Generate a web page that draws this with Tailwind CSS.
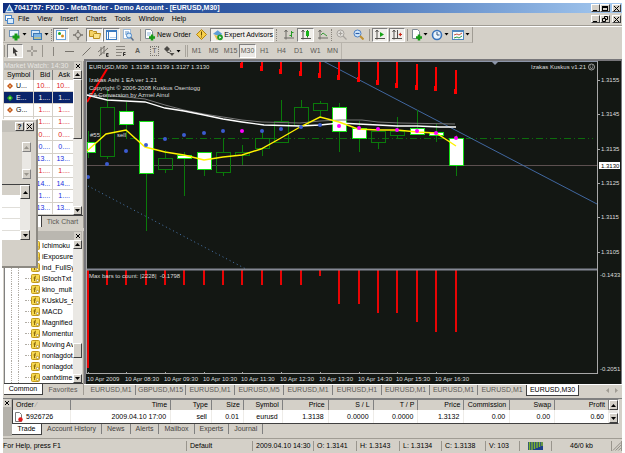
<!DOCTYPE html>
<html lang="en">

<head>
  <meta charset="UTF-8">
  <meta name="viewport" content="width=device-width, initial-scale=1.0">
  <title>7041757: FXDD - MetaTrader - Demo Account - [EURUSD,M30]</title>
  <script src="https://cdn.jsdelivr.net/npm/@tailwindcss/browser@4"></script>
</head>

<body class="bg-white font-['Liberation_Sans','Arial',sans-serif] text-[7px] leading-[10px] text-black overflow-hidden">
  <div class="mx-[3px] mt-[3px] bg-[#d4d0c8] min-h-screen">

    <!-- Title bar -->
    <header class="flex items-center h-[10px] bg-linear-to-r from-[#0f2f80] via-[#3d68b0] to-[#a6caf0] text-white pl-[2px] pr-[1px]">
      <svg class="w-[9px] h-[9px]" viewBox="0 0 9 9"><path d="M4.500 0L9 8.500H0z" fill="#dbe9f5" /><path d="M4.500 2L6.500 7H2z" fill="#3f8bd0" /></svg>
      <h1 class="flex-1 font-bold whitespace-nowrap">7041757: FXDD - MetaTrader - Demo Account - [EURUSD,M30]</h1>
      <div class="flex">
        <button aria-label="Minimize" class="w-[9px] h-[8px] bg-[#d4d0c8] border border-t-white border-l-white border-r-[#404040] border-b-[#404040] flex items-end pl-px"><span class="w-[4px] h-px bg-black"></span></button>
        <button aria-label="Maximize" class="w-[10px] h-[8px] bg-[#d4d0c8] border border-t-white border-l-white border-r-[#404040] border-b-[#404040] flex items-center justify-center"><span class="w-[6px] h-[5px] border border-t-2 border-black"></span></button>
        <button aria-label="Close" class="ml-[2px] w-[9px] h-[8px] bg-[#d4d0c8] border border-t-white border-l-white border-r-[#404040] border-b-[#404040] flex items-center justify-center"><svg class="w-[5px] h-[5px]" viewBox="0 0 5 5"><path d="M0 0L5 5M5 0L0 5" stroke="#000" /></svg></button>
      </div>
    </header>

    <!-- Menu -->
    <nav class="flex items-center h-[13px] pl-[2px] pr-[1px] border-b border-[#a09c94]">
      <svg class="w-[9px] h-[9px] mr-[4px]" viewBox="0 0 9 9"><rect x=".5" y=".5" width="6" height="5" fill="#fff" stroke="#4a86c8" /><rect x="2.500" y="3.500" width="6" height="5" fill="#d9ecfb" stroke="#4a86c8" /></svg>
      <div class="flex flex-1 gap-[8px]">
        <a href="#">File</a><a href="#">View</a><a href="#">Insert</a><a href="#">Charts</a><a href="#">Tools</a><a href="#">Window</a><a href="#">Help</a>
      </div>
      <button aria-label="Minimize chart" class="w-[9px] h-[8px] border border-t-white border-l-white border-r-[#404040] border-b-[#404040] flex items-end pl-px"><span class="w-[4px] h-px bg-black"></span></button>
      <button aria-label="Restore chart" class="w-[10px] h-[8px] border border-t-white border-l-white border-r-[#404040] border-b-[#404040] flex items-center justify-center"><svg class="w-[6px] h-[6px]" viewBox="0 0 6 6"><path d="M2.500 2V.5H5.500V3.500H4M.5 2.500h3v3h-3z" fill="none" stroke="#000" /></svg></button>
      <button aria-label="Close chart" class="ml-[2px] w-[9px] h-[8px] border border-t-white border-l-white border-r-[#404040] border-b-[#404040] flex items-center justify-center"><svg class="w-[5px] h-[5px]" viewBox="0 0 5 5"><path d="M0 0L5 5M5 0L0 5" stroke="#000" /></svg></button>
    </nav>

    <!-- Standard toolbar -->
    <div class="flex border-t border-white">
      <div class="flex items-center h-[16px] pl-px border-r border-b border-r-[#a09c94] border-b-[#b8b4ac]">
        <span class="w-[2px] h-[12px] mr-px border-l border-[#99958d]"></span>
        <button aria-label="New chart" class="flex items-center w-[22px] h-[14px] pl-[2px]">
          <svg class="w-[12px] h-[12px]" viewBox="0 0 12 12"><rect x=".5" y="1.500" width="9" height="6" fill="#eaf4fc" stroke="#6a8fb5" /><path d="M7 4.500v7M3.500 8h7" stroke="#169a16" stroke-width="3" /></svg>
          <svg class="w-[5px] h-[3px] ml-px" viewBox="0 0 5 3"><path d="M.5 0h4L2.500 2.500z" /></svg>
        </button>
        <button aria-label="Profiles" class="flex items-center w-[22px] h-[14px] pl-[2px]">
          <svg class="w-[12px] h-[12px]" viewBox="0 0 12 12"><rect x=".5" y="1.500" width="8" height="6" fill="#d5e8f8" stroke="#4f8ac4" /><rect x="2.500" y="4.500" width="8" height="6" fill="#7db4e4" stroke="#3c78b4" /><path d="M3 9h7" stroke="#e9c94a" /></svg>
          <svg class="w-[5px] h-[3px] ml-px" viewBox="0 0 5 3"><path d="M.5 0h4L2.500 2.500z" /></svg>
        </button>
        <span class="w-[2px] h-[12px] border-l border-dotted border-[#88847c]"></span>
        <button aria-label="Market Watch" aria-pressed="true" class="flex items-center justify-center w-[16px] h-[14px] bg-[#f0eeea] border border-t-[#808080] border-l-[#808080] border-r-white border-b-white">
          <svg class="w-[10px] h-[10px]" viewBox="0 0 10 10"><rect x=".5" y=".5" width="9" height="9" fill="#fff" stroke="#66a2dc" /><circle cx="3.500" cy="3.500" r="1.500" fill="#1da51d" /><circle cx="6.500" cy="6" r="1.500" fill="#d88b1c" /></svg>
        </button>
        <button aria-label="Data Window" class="flex items-center justify-center w-[17px] h-[14px]">
          <svg class="w-[10px] h-[10px]" viewBox="0 0 10 10"><circle cx="5" cy="5" r="2.500" fill="none" stroke="#77736c" /><path d="M5 0v3M5 7v3M0 5h3M7 5h3" stroke="#77736c" stroke-width="1.500" /></svg>
        </button>
        <button aria-label="Navigator" aria-pressed="true" class="flex items-center justify-center w-[17px] h-[14px] bg-[#f0eeea] border border-t-[#808080] border-l-[#808080] border-r-white border-b-white">
          <svg class="w-[12px] h-[11px]" viewBox="0 0 12 11"><path d="M.5 1.500h3l1 1h3v5h-7z" fill="#f4d264" stroke="#b98d1d" /><path d="M4.500 5.500l1-1h6l-1 5h-6z" fill="#fbe48a" stroke="#b98d1d" /></svg>
        </button>
        <button aria-label="Terminal" aria-pressed="true" class="flex items-center justify-center w-[17px] h-[14px] bg-[#f0eeea] border border-t-[#808080] border-l-[#808080] border-r-white border-b-white">
          <svg class="w-[11px] h-[10px]" viewBox="0 0 11 10"><rect x=".5" y=".5" width="10" height="9" fill="#fff" stroke="#3b7ac0" /><path d="M1 1.500h9M2.500 1v8" stroke="#3b7ac0" /><path d="M4 7.500h6" stroke="#b8d2ec" /></svg>
        </button>
        <button aria-label="Strategy Tester" class="flex items-center justify-center w-[17px] h-[14px]">
          <svg class="w-[11px] h-[12px]" viewBox="0 0 11 12"><rect x=".5" y=".5" width="7" height="9" fill="#fff" stroke="#9db9d6" /><path d="M2 3h4M2 5h3" stroke="#5c93cc" /><circle cx="6" cy="6.500" r="2.500" fill="#d8ebfa" stroke="#4a86c8" /><path d="M8 8.500l2.500 3" stroke="#5b6f88" stroke-width="1.500" /></svg>
        </button>
        <span class="h-[12px] mx-[3px] border-l border-[#99958d]"></span>
        <button class="flex items-center w-[48px] h-[14px] whitespace-nowrap">
          <svg class="w-[12px] h-[12px] mr-px" viewBox="0 0 12 12"><path d="M1.500 .5h5l2 2v7h-7z" fill="#fff" stroke="#7f8a95" /><path d="M3 4h4M3 6h3" stroke="#8db5da" /><path d="M8 5.500v6M5 8.500h6" stroke="#169a16" stroke-width="2.500" /></svg>
          New Order
        </button>
        <button aria-label="MetaEditor" class="flex items-center justify-center w-[18px] h-[14px]">
          <svg class="w-[11px] h-[11px]" viewBox="0 0 11 11"><path d="M5.500 .5l5 5-5 5-5-5z" fill="#f6cf4c" stroke="#b4830f" /><path d="M5.500 2.500v4M5.500 7.500v1" stroke="#6b4b00" /></svg>
        </button>
        <button aria-pressed="true" class="flex items-center w-[64px] h-[14px] pl-px bg-[#f0eeea] whitespace-nowrap border border-t-[#808080] border-l-[#808080] border-r-white border-b-white">
          <svg class="w-[12px] h-[12px] mr-px" viewBox="0 0 12 12"><path d="M1 5l5-4 5 4-4 2z" fill="#5e9ed8" /><path d="M2 5.500l4 1.500 2-1 1 4-4 1z" fill="#e9be50" /><circle cx="8.500" cy="8.500" r="3" fill="#1e9c2a" /><path d="M7.700 7l2.200 1.500-2.200 1.500z" fill="#fff" /></svg>
          Expert Advisors
        </button>
        <span class="w-[2px] h-[12px] ml-[2px] mr-[2px] border-l border-dotted border-[#88847c]"></span>
        <button aria-label="Bar chart" class="flex items-center justify-center w-[17px] h-[14px]">
          <svg class="w-[10px] h-[10px]" viewBox="0 0 10 10"><path d="M2 0v9.500M0 8h10M.5 2l1.500-2 1.500 2" fill="none" stroke="#6c6a66" /><path d="M7.500 1v6M5.500 5.500h2M7.500 2.500H9.500" stroke="#249a24" /></svg>
        </button>
        <button aria-label="Candlesticks" aria-pressed="true" class="flex items-center justify-center w-[17px] h-[14px] bg-[#f0eeea] border border-t-[#808080] border-l-[#808080] border-r-white border-b-white">
          <svg class="w-[10px] h-[10px]" viewBox="0 0 10 10"><path d="M2 0v9.500M0 8.500h10M.5 2l1.500-2 1.500 2" fill="none" stroke="#55534f" /><path d="M6.500 0v7.500" stroke="#0b7d0b" /><rect x="5" y="1" width="3" height="5" fill="#17b317" /></svg>
        </button>
        <button aria-label="Line chart" class="flex items-center justify-center w-[17px] h-[14px]">
          <svg class="w-[10px] h-[10px]" viewBox="0 0 10 10"><path d="M2 0v9.500M0 8h10M.5 2l1.500-2 1.500 2" fill="none" stroke="#6c6a66" /><path d="M3 5l2-2 4 3" fill="none" stroke="#3a9a3a" /></svg>
        </button>
        <span class="w-[2px] h-[12px] border-l border-dotted border-[#88847c]"></span>
        <button aria-label="Zoom in" class="flex items-center justify-center w-[17px] h-[14px]">
          <svg class="w-[11px] h-[11px]" viewBox="0 0 11 11"><circle cx="4.500" cy="4.500" r="3.500" fill="#e2e0dc" stroke="#a5a29c" /><path d="M2.500 4.500h4M4.500 2.500v4M7 7l3.500 3.500" stroke="#a5a29c" stroke-width="1.200" /></svg>
        </button>
        <button aria-label="Zoom out" class="flex items-center justify-center w-[17px] h-[14px]">
          <svg class="w-[11px] h-[11px]" viewBox="0 0 11 11"><circle cx="4.500" cy="4.500" r="3.500" fill="#d2e8fb" stroke="#4a7fc4" /><path d="M2.500 4.500h4" stroke="#2d5fa8" stroke-width="1.200" /><path d="M7 7l3.500 3.500" stroke="#c09030" stroke-width="2" /></svg>
        </button>
        <span class="h-[12px] mx-[2px] border-l border-[#99958d]"></span>
        <button aria-label="Auto scroll" aria-pressed="true" class="flex items-center justify-center w-[16px] h-[14px] bg-[#f0eeea] border border-t-[#808080] border-l-[#808080] border-r-white border-b-white">
          <svg class="w-[10px] h-[10px]" viewBox="0 0 10 10"><path d="M2 0v9.500M0 8.500h10M.5 2l1.500-2 1.500 2" fill="none" stroke="#55534f" /><path d="M5 2l4 2.500L5 7z" fill="#17a317" /></svg>
        </button>
        <button aria-label="Chart shift" aria-pressed="true" class="flex items-center justify-center w-[16px] h-[14px] ml-px bg-[#f0eeea] border border-t-[#808080] border-l-[#808080] border-r-white border-b-white">
          <svg class="w-[10px] h-[10px]" viewBox="0 0 10 10"><path d="M2 0v9.500M0 8.500h10M.5 2l1.500-2 1.500 2M5.500 0v8" fill="none" stroke="#55534f" /><path d="M6.500 4.500l2.500-2v4z" fill="#cc2c1c" /><path d="M8 4.500h2" stroke="#cc2c1c" /></svg>
        </button>
        <span class="h-[12px] mx-[2px] border-l border-[#99958d]"></span>
        <button aria-label="Indicators" class="flex items-center w-[20px] h-[14px] pl-px">
          <svg class="w-[12px] h-[12px]" viewBox="0 0 12 12"><path d="M1.500 .5h5l2 2v7h-7z" fill="#fff" stroke="#7f8a95" /><path d="M8 5.500v6M5 8.500h6" stroke="#169a16" stroke-width="2.500" /></svg>
          <svg class="w-[5px] h-[3px]" viewBox="0 0 5 3"><path d="M.5 0h4L2.500 2.500z" /></svg>
        </button>
        <button aria-label="Periods" class="flex items-center w-[20px] h-[14px] pl-px">
          <svg class="w-[12px] h-[12px]" viewBox="0 0 12 12"><circle cx="6" cy="6" r="4.500" fill="#e8f3fd" stroke="#3a74bc" stroke-width="1.600" /><path d="M6 3v3h2.500" fill="none" stroke="#34547c" /></svg>
          <svg class="w-[5px] h-[3px] ml-px" viewBox="0 0 5 3"><path d="M.5 0h4L2.500 2.500z" /></svg>
        </button>
        <button aria-label="Templates" class="flex items-center w-[22px] h-[14px] pl-[2px]">
          <svg class="w-[12px] h-[10px]" viewBox="0 0 12 10"><rect x=".5" y=".5" width="11" height="9" fill="#f5faff" stroke="#4f86bd" /><path d="M1 1.500h10" stroke="#4f86bd" /><path d="M2 5l3-1 2 1 3-2" fill="none" stroke="#c4533c" /><path d="M2 8l3-1 2 1 3-2" fill="none" stroke="#2d9a40" /></svg>
          <svg class="w-[5px] h-[3px] ml-px" viewBox="0 0 5 3"><path d="M.5 0h4L2.500 2.500z" /></svg>
        </button>
      </div>
    </div>

    <!-- Line studies and timeframes -->
    <div class="flex h-[16px]">
      <div class="flex items-center pl-px text-[#5c5a56] border-r border-[#b8b4ac]">
        <span class="w-[2px] h-[12px] mr-px border-l border-[#99958d]"></span>
        <button aria-label="Cursor" aria-pressed="true" class="flex items-center justify-center w-[16px] h-[14px] bg-[#ebe9e5] border border-t-[#808080] border-l-[#808080] border-r-white border-b-white">
          <svg class="w-[8px] h-[9px]" viewBox="0 0 8 9"><path d="M2 0l5 5H4.500L6 8.500 4.500 9 3.200 5.800 2 7z" fill="#3c3a38" /></svg>
        </button>
        <button aria-label="Crosshair" class="flex items-center justify-center w-[18px] h-[14px]">
          <svg class="w-[10px] h-[10px]" viewBox="0 0 10 10"><path d="M5 0v4M5 6v4M0 5h4M6 5h4" stroke="#77736c" /></svg>
        </button>
        <span class="h-[12px] mx-px border-l border-[#99958d]"></span>
        <button aria-label="Vertical line" class="flex items-center justify-center w-[17px] h-[14px]">
          <svg class="w-[8px] h-[9px]" viewBox="0 0 8 9"><path d="M4.500 0v9" stroke="#88847d" /></svg>
        </button>
        <button aria-label="Horizontal line" class="flex items-center justify-center w-[17px] h-[14px]">
          <svg class="w-[9px] h-[9px]" viewBox="0 0 9 9"><path d="M0 4.500h9" stroke="#77736c" /></svg>
        </button>
        <button aria-label="Trendline" class="flex items-center justify-center w-[17px] h-[14px]">
          <svg class="w-[9px] h-[9px]" viewBox="0 0 9 9"><path d="M.5 8.500l8-8" stroke="#77736c" /></svg>
        </button>
        <button aria-label="Equidistant channel" class="flex items-center justify-center w-[17px] h-[14px]">
          <svg class="w-[11px] h-[11px]" viewBox="0 0 11 11"><path d="M0 6l7-6M1 10l9-8M3 1v8M6 0v8" stroke="#77736c" /><path d="M10.500 7.500h-2v3h2M8.500 9h2" fill="none" stroke="#33312f" /></svg>
        </button>
        <button aria-label="Fibonacci retracement" class="flex items-center justify-center w-[17px] h-[14px]">
          <svg class="w-[10px] h-[10px]" viewBox="0 0 10 10"><path d="M0 .5h9M0 3.500h9M0 6.500h6M0 9.500h5" stroke="#8a867f" /><path d="M9.500 6.500h-2v3.500M7.500 8.500h2" fill="none" stroke="#33312f" /></svg>
        </button>
        <button class="w-[17px] h-[14px] font-bold">A</button>
        <button aria-label="Text label" class="flex items-center justify-center w-[17px] h-[14px]"><span class="w-[9px] h-[10px] leading-[8px] border border-dotted border-[#77736c]">T</span></button>
        <button aria-label="Arrows" class="flex items-center w-[22px] h-[14px] pl-px">
          <svg class="w-[11px] h-[10px]" viewBox="0 0 11 10"><path d="M0 3l3-3 3 3-3 3z" fill="#4c4a46" /><path d="M3 6l3 1M6 4l1 2" stroke="#4c4a46" /><path d="M5.500 7h5L8 10z" fill="#4c4a46" /></svg>
          <svg class="w-[5px] h-[3px] ml-px" viewBox="0 0 5 3"><path d="M.5 0h4L2.500 2.500z" /></svg>
        </button>
        <span class="w-[3px] h-[12px] border-l border-r border-[#a8a49c]"></span>
        <button class="w-[17px] h-[14px]">M1</button>
        <button class="w-[17px] h-[14px]">M5</button>
        <button class="w-[17px] h-[14px]">M15</button>
        <button aria-pressed="true" class="w-[17px] h-[14px] bg-[#ebe9e5] border border-t-[#808080] border-l-[#808080] border-r-white border-b-white">M30</button>
        <button class="w-[17px] h-[14px]">H1</button>
        <button class="w-[17px] h-[14px]">H4</button>
        <button class="w-[17px] h-[14px]">D1</button>
        <button class="w-[17px] h-[14px]">W1</button>
        <button class="w-[17px] h-[14px]">MN</button>
      </div>
    </div>

    <main class="flex">
      <!-- Left panels -->
      <aside class="relative w-[81px] shrink-0 pl-px pt-[2px]">
        <section class="border-r border-[#a09c94]">
          <div class="flex items-center justify-between h-[9px] mr-px pr-px bg-[#bab7b0] text-[#e8e6e2]">
            <h2 class="whitespace-nowrap">Market Watch: 14:30</h2>
            <button aria-label="Close Market Watch" class="bg-[#d4d0c8] w-[7px] h-[8px] flex items-center justify-center"><svg class="w-[4px] h-[4px]" viewBox="0 0 4 4"><path d="M0 0L4 4M4 0L0 4" stroke="#000" /></svg></button>
          </div>
          <div class="flex mr-px">
            <table class="flex-1 h-[145px] table-fixed bg-white text-right">
              <thead>
                <tr class="h-[10px] bg-[#d4d0c8]">
                  <th class="w-[29px] p-0 pl-[3px] font-normal text-left border-r border-[#808080]">Symbol</th>
                  <th class="w-[19px] p-0 pr-[2px] font-normal border-r border-[#808080]">Bid</th>
                  <th class="w-[20px] p-0 pr-[3px] font-normal">Ask</th>
                </tr>
              </thead>
              <tbody id="quotes"></tbody>
            </table>
            <div class="w-[9px] flex flex-col bg-[#eae8e4]">
              <span class="h-[9px] flex items-center justify-center bg-[#d4d0c8] border border-t-white border-l-white border-r-[#404040] border-b-[#404040]"><svg class="w-[5px] h-[3px]" viewBox="0 0 5 3"><path d="M0 3h5L2.500 0z" /></svg></span>
              <span class="h-[60px] bg-[#d4d0c8] border border-t-white border-l-white border-r-[#404040] border-b-[#404040]"></span>
              <span class="flex-1"></span>
              <span class="h-[9px] flex items-center justify-center bg-[#d4d0c8] border border-t-white border-l-white border-r-[#404040] border-b-[#404040]"><svg class="w-[5px] h-[3px]" viewBox="0 0 5 3"><path d="M0 0h5L2.500 3z" /></svg></span>
            </div>
          </div>
          <div class="flex h-[13px] border-t border-[#404040]">
            <button aria-label="Symbols" class="w-[38px] bg-white border-r border-[#404040] mb-px"></button>
            <button class="flex-1 text-[#5c5a56] whitespace-nowrap">Tick Chart</button>
          </div>
        </section>

        <section aria-label="Navigator" class="mt-[3px] border-r border-[#a09c94]">
          <div class="flex items-center justify-end h-[9px] mr-px pr-px bg-[#bab7b0]">
            <button aria-label="Close Navigator" class="bg-[#d4d0c8] w-[7px] h-[8px] flex items-center justify-center"><svg class="w-[4px] h-[4px]" viewBox="0 0 4 4"><path d="M0 0L4 4M4 0L0 4" stroke="#000" /></svg></button>
          </div>
          <div class="flex mr-px">
            <ul id="indicators" class="flex-1 min-w-0 bg-white pl-[6px] border-l border-[#808080]"></ul>
            <div class="w-[9px] flex flex-col bg-[#eae8e4]">
              <span class="h-[9px] flex items-center justify-center bg-[#d4d0c8] border border-t-white border-l-white border-r-[#404040] border-b-[#404040]"><svg class="w-[5px] h-[3px]" viewBox="0 0 5 3"><path d="M0 3h5L2.500 0z" /></svg></span>
              <span class="flex-1"></span>
              <span class="h-[15px] bg-[#d4d0c8] border border-t-white border-l-white border-r-[#404040] border-b-[#404040]"></span>
              <span class="h-[16px]"></span>
              <span class="h-[9px] flex items-center justify-center bg-[#d4d0c8] border border-t-white border-l-white border-r-[#404040] border-b-[#404040]"><svg class="w-[5px] h-[3px]" viewBox="0 0 5 3"><path d="M0 0h5L2.500 3z" /></svg></span>
            </div>
          </div>
          <div class="flex h-[12px] border-t border-[#404040]">
            <button class="w-[39px] bg-white border-r border-b border-[#404040]">Common</button>
            <button class="flex-1 text-[#5c5a56]">Favorites</button>
          </div>
        </section>

        <!-- Dialog lying over the panels -->
        <div role="dialog" aria-label="Properties" class="absolute -left-px top-[60px] w-[36px] h-[149px] flex flex-col bg-[#d4d0c8] border-t border-t-white border-r-2 border-b-2 border-r-[#8c8982] border-b-[#8c8982]">
          <div class="flex justify-end items-center gap-px h-[11px] mt-px mr-[2px] bg-[#c4c1ba]">
            <button aria-label="Help" class="w-[9px] h-[9px] leading-[7px] font-bold bg-[#d4d0c8] border border-t-white border-l-white border-r-[#404040] border-b-[#404040]">?</button>
            <button aria-label="Close" class="w-[9px] h-[9px] flex items-center justify-center bg-[#d4d0c8] border border-t-white border-l-white border-r-[#404040] border-b-[#404040]"><svg class="w-[5px] h-[5px]" viewBox="0 0 5 5"><path d="M0 0L5 5M5 0L0 5" stroke="#000" /></svg></button>
          </div>
          <div class="flex justify-end h-[37px] mt-[10px] mr-[5px]">
            <div class="w-[9px] flex flex-col justify-between bg-[#eae8e4]">
              <span class="h-[10px] flex items-center justify-center bg-[#d4d0c8] border border-t-white border-l-white border-r-[#808080] border-b-[#808080]"><svg class="w-[5px] h-[3px]" viewBox="0 0 5 3"><path d="M0 3h5L2.500 0z" fill="#99958d" /></svg></span>
              <span class="h-[10px] flex items-center justify-center bg-[#d4d0c8] border border-t-white border-l-white border-r-[#808080] border-b-[#808080]"><svg class="w-[5px] h-[3px]" viewBox="0 0 5 3"><path d="M0 0h5L2.500 3z" fill="#99958d" /></svg></span>
            </div>
          </div>
          <div class="flex h-[56px] mt-[5px] mr-[6px] border-t border-[#404040]">
            <div class="flex-1 flex flex-col bg-white">
              <span class="h-[10px] bg-[#d4d0c8]"></span>
              <span class="h-[12px]"></span>
              <span class="h-[12px] border-y border-[#e0ded9]"></span>
              <span class="h-[12px] border-b border-[#e0ded9]"></span>
            </div>
            <div class="w-[10px] flex flex-col justify-between bg-[#eae8e4]">
              <span class="h-[14px] flex items-center justify-center bg-[#d4d0c8] border border-t-white border-l-white border-r-[#404040] border-b-[#404040]"><svg class="w-[5px] h-[3px]" viewBox="0 0 5 3"><path d="M0 3h5L2.500 0z" /></svg></span>
              <span class="h-[10px] flex items-center justify-center bg-[#d4d0c8] border border-t-white border-l-white border-r-[#404040] border-b-[#404040]"><svg class="w-[5px] h-[3px]" viewBox="0 0 5 3"><path d="M0 0h5L2.500 3z" /></svg></span>
            </div>
          </div>
        </div>
      </aside>

      <!-- Chart window -->
      <section class="flex-1 min-w-0">
        <svg id="chart" class="block w-full" viewBox="84 58 538 325" font-size="6" fill="#dcdcdc">
          <rect x="84" y="58" width="538" height="325" fill="#77767a" />
          <rect x="86" y="60" width="535" height="323" fill="#131713" />
          <g id="plot"></g>
          <path d="M87 60.500H598" stroke="#8c95a8" />
          <path d="M86 268.500H598" stroke="#848894" stroke-width="2" />
          <path d="M86.500 60V372M597.500 60V372.500M86 372.500H598" stroke="#a8a8a8" fill="none" />
          <path d="M492 61h6l-3 3z" fill="#8c95a8" />
          <text x="89" y="68">EURUSD,M30&#160; 1.3138 1.3139 1.3127 1.3130</text>
          <text x="89" y="81">Izakas Ashi 1 EA ver 1.21</text>
          <text x="89" y="89">Copyright © 2006-2008 Kuskus Osentogg</text>
          <text x="89" y="96">EA Conversion by Azmel Ainul</text>
          <text x="90" y="136">#55</text>
          <text x="117" y="136">sell</text>
          <text x="586" y="68" text-anchor="end">Izakas Kuskus v1.21</text>
          <circle cx="591.500" cy="66" r="3" fill="none" stroke="#c4c4c4" stroke-width=".8" />
          <path d="M590 66.500q1.500 2 3 0M590.300 65h.8M592 65h.8" fill="none" stroke="#c4c4c4" stroke-width=".8" />
          <text x="89" y="277">Max bars to count: |2228|&#160; -0.1798</text>
        </svg>

        <div class="flex h-[11px] border-t border-white text-[#5c5a56]">
          <div class="flex flex-1 pl-[3px]">
            <button class="w-[49px] h-[10px] border-r border-[#808080]">EURUSD,M1</button>
            <button class="w-[50px] h-[10px] border-r border-[#808080]">GBPUSD,M15</button>
            <button class="w-[49px] h-[10px] border-r border-[#808080]">EURUSD,M1</button>
            <button class="w-[49px] h-[10px] border-r border-[#808080]">EURUSD,M5</button>
            <button class="w-[49px] h-[10px] border-r border-[#808080]">EURUSD,M1</button>
            <button class="w-[49px] h-[10px] border-r border-[#808080]">EURUSD,H1</button>
            <button class="w-[48px] h-[10px] border-r border-[#808080]">EURUSD,M1</button>
            <button class="w-[48px] h-[10px] border-r border-[#808080]">EURUSD,M1</button>
            <button class="w-[48px] h-[10px]">EURUSD,M1</button>
            <button class="w-[53px] h-[11px] bg-white text-black border border-t-0 border-[#404040]">EURUSD,M30</button>
          </div>
          <div class="flex items-center gap-[6px] pr-[4px]">
            <button aria-label="Scroll tabs left"><svg class="w-[3px] h-[5px]" viewBox="0 0 3 5"><path d="M3 0v5L0 2.500z" fill="#a09c94" /></svg></button>
            <button aria-label="Scroll tabs right"><svg class="w-[3px] h-[5px]" viewBox="0 0 3 5"><path d="M0 0v5L3 2.500z" fill="#a09c94" /></svg></button>
          </div>
        </div>
      </section>
    </main>

    <!-- Terminal -->
    <section class="mt-[3px] border-t border-[#808080]">
      <div class="flex">
        <div class="w-[9px] shrink-0 bg-[#b4b1aa] pr-px">
          <button aria-label="Close Terminal" class="flex w-[8px] h-[8px] items-center justify-center bg-[#d4d0c8]"><svg class="w-[4px] h-[4px]" viewBox="0 0 4 4"><path d="M0 0L4 4M4 0L0 4" stroke="#000" /></svg></button>
        </div>
        <div class="flex-1 min-w-0 pr-[3px]">
          <div class="flex border border-t-[#808080] border-l-[#404040] border-b-[#404040] border-r-white">
            <table class="flex-1 table-fixed bg-white text-right">
              <thead>
                <tr class="h-[10px] bg-[#d4d0c8] *:p-0 *:pr-[3px] *:font-normal *:border-r *:border-[#808080]">
                  <th class="w-[58px] text-left"><span class="pl-[3px]">Order</span> <span class="text-[#99958d]">⁄</span></th>
                  <th class="w-[100px]">Time</th>
                  <th class="w-[41px]">Type</th>
                  <th class="w-[32px]">Size</th>
                  <th class="w-[39px]">Symbol</th>
                  <th class="w-[46px]">Price</th>
                  <th class="w-[45px]">S / L</th>
                  <th class="w-[45px]">T / P</th>
                  <th class="w-[46px]">Price</th>
                  <th class="w-[46px]">Commission</th>
                  <th class="w-[45px]">Swap</th>
                  <th class="w-[54px]">Profit</th>
                </tr>
              </thead>
              <tbody>
                <tr class="h-[13px] *:p-0 *:pr-[4px] *:border-r *:border-[#eeece8]">
                  <td>
                    <div class="flex items-center pl-px gap-[3px]">
                      <svg class="w-[9px] h-[10px]" viewBox="0 0 9 10"><path d="M1.500 .5h4l2 2v7h-6z" fill="#fff" stroke="#7a7a7a" /><circle cx="6.500" cy="7.500" r="2.200" fill="#e21a1a" /></svg>
                      5926726
                    </div>
                  </td>
                  <td>2009.04.10 17:00</td>
                  <td>sell</td>
                  <td>0.01</td>
                  <td>eurusd</td>
                  <td>1.3138</td>
                  <td>0.0000</td>
                  <td>0.0000</td>
                  <td>1.3132</td>
                  <td>0.00</td>
                  <td>0.00</td>
                  <td>0.60</td>
                </tr>
              </tbody>
            </table>
            <div class="w-[9px] flex flex-col justify-between bg-[#eae8e4]">
              <span class="h-[10px] flex items-center justify-center bg-[#d4d0c8] border border-t-white border-l-white border-r-[#404040] border-b-[#404040]"><svg class="w-[5px] h-[3px]" viewBox="0 0 5 3"><path d="M0 3h5L2.500 0z" /></svg></span>
              <span class="h-[10px] flex items-center justify-center bg-[#d4d0c8] border border-t-white border-l-white border-r-[#404040] border-b-[#404040]"><svg class="w-[5px] h-[3px]" viewBox="0 0 5 3"><path d="M0 0h5L2.500 3z" /></svg></span>
            </div>
          </div>
          <div class="flex h-[12px] items-start text-[#45433f]">
            <button class="w-[30px] h-[11px] bg-white text-black border-r border-b border-[#404040]">Trade</button>
            <button class="h-[10px] px-[5px] border-r border-[#808080]">Account History</button>
            <button class="h-[10px] px-[5px] border-r border-[#808080]">News</button>
            <button class="h-[10px] px-[5px] border-r border-[#808080]">Alerts</button>
            <button class="h-[10px] px-[5px] border-r border-[#808080]">Mailbox</button>
            <button class="h-[10px] px-[5px] border-r border-[#808080]">Experts</button>
            <button class="h-[10px] px-[5px] border-r border-[#808080]">Journal</button>
          </div>
        </div>
      </div>
    </section>

    <!-- Status bar -->
    <footer class="flex items-center h-[15px] mt-[2px] border-t border-[#a09c94] whitespace-nowrap *:border-r *:border-[#99958d] *:h-[10px]">
      <span class="flex-1">For Help, press F1</span>
      <span class="w-[66px] pl-[3px]">Default</span>
      <span class="w-[61px] pl-[3px]">2009.04.10 14:30</span>
      <span class="w-[43px] pl-[3px]">O: 1.3141</span>
      <span class="w-[43px] pl-[3px]">H: 1.3143</span>
      <span class="w-[42px] pl-[3px]">L: 1.3134</span>
      <span class="w-[44px] pl-[3px]">C: 1.3138</span>
      <span class="w-[34px] pl-[3px]">V: 103</span>
      <div class="w-[32px] flex items-center justify-center">
        <svg class="w-[15px] h-[8px]" viewBox="0 0 15 8"><rect width="15" height="8" fill="#1d3f8a" /><path d="M1.500 0v8M4 0v8M6.500 0v7M9 0v6M11.500 0v5M14 0v4" stroke="#7fb52e" stroke-width="1.500" /></svg>
      </div>
      <span class="w-[60px] text-center">46/0 kb</span>
      <svg class="w-[10px]" viewBox="0 0 10 10"><path d="M1 10l9-9M4 10l6-6M7 10l3-3" stroke="#88847d" /></svg>
    </footer>
  </div>

  <script>
    // Market Watch rows: symbol, bid, ask, direction
    const quotes = [
      ['U...', '10...', '10...', 'down'], ['E...', '1....', '1....', 'selected'], ['G...', '1....', '1....', 'down'],
      ['', '1....', '1....', 'down'], ['', '0....', '0....', 'down'], ['', '0....', '0....', 'up'],
      ['', '13...', '13...', 'up'], ['', '1....', '1....', 'down'], ['', '14...', '14...', 'up'],
      ['', '1....', '1....', 'up'], ['', '13...', '13...', 'up']
    ];
    const tone = { down: 'text-[#e02020]', up: 'text-[#2030e0]', selected: 'text-white' };

    document.getElementById('quotes').innerHTML = quotes.map(([name, bid, ask, dir]) => {
      const selected = dir === 'selected';
      return `<tr class="${selected ? 'bg-[#0a246a] text-white' : ''} border-b border-[#d4d0c8]">
        <td class="p-0 text-left border-r border-[#d4d0c8]"><div class="flex items-center gap-[3px] pl-[3px]">
          <svg class="w-[6px] h-[6px]" viewBox="0 0 6 6"><path d="M3 0l3 3-3 3-3-3z" fill="${selected ? '#20b020' : '#c4581c'}"/><path d="M3 2l1 1-1 1-1-1z" fill="#ffe9a0"/></svg>${name}</div></td>
        <td class="p-0 pr-[2px] border-r border-[#d4d0c8] ${tone[dir]}">${bid}</td>
        <td class="p-0 pr-[3px] ${tone[dir]}">${ask}</td></tr>`;
    }).join('');

    const indicators = ['Ichimoku', 'iExposure', 'ind_FullSy', 'iStochTxt', 'kino_mult', 'KUskUs_s', 'MACD', 'Magnified',
      'Momentum', 'Moving Av', 'nonlagdot', 'nonlagdot', 'oanfxtime'];

    document.getElementById('indicators').innerHTML = indicators.map(name =>
      `<li class="flex items-center h-[11px] border-l border-dotted border-[#b0aca4] overflow-hidden whitespace-nowrap">
        <span class="w-[7px] h-full shrink-0 border-r border-dotted border-[#b0aca4]"></span>
        <span class="w-[6px] ml-[6px] shrink-0 border-t border-dotted border-[#b0aca4]"></span>
        <svg class="w-[9px] h-[9px] mr-[2px] shrink-0" viewBox="0 0 9 9"><rect x=".5" y=".5" width="8" height="8" rx="1" fill="#f6d84e" stroke="#c29a1c"/><path d="M5 2q-1.500 0-1.500 2v3M2.500 4h2.500" fill="none" stroke="#8a6a10"/><circle cx="6.500" cy="6.500" r="1.200" fill="#fff" stroke="#8a6a10" stroke-width=".6"/></svg>
        <span>${name}</span></li>`).join('');

    // Chart: bar x positions step by 19.37
    const barX = i => Math.round(87.5 + i * 19.37);
    // high, body top, body bottom, low, filled
    const candles = [
      [130, 141, 151, 157, 1], [89, 106, 155, 158, 0], [101, 110, 123, 138, 1], [120, 120, 172, 230, 1],
      [149, 157, 168, 172, 0], [151, 154, 157, 195, 1], [151, 151, 168, 175, 1], [137, 151, 171, 175, 0],
      [144, 151, 154, 164, 0], [129, 137, 147, 155, 0], [99, 120, 141, 141, 0], [99, 106, 124, 124, 0],
      [100, 102, 109, 117, 0], [102, 106, 130, 151, 1], [120, 127, 137, 151, 1], [130, 130, 141, 148, 0],
      [116, 130, 134, 137, 0], [109, 127, 133, 134, 1], [123, 131, 134, 141, 1], [134, 137, 164, 175, 1]
    ];
    const dots = [176, 163, 150, 144, 138, 134, 132, 130, 130, 130, 128, 126, 124, 125, 127, 128, 129, 130, 132, 137];
    const topBars = [[61, 67], [61, 70], [61, 73], [61, 75], [61, 77], [61, 79], [61, 81], [61, 84], [61, 87], [63, 89], [66, 90], [69, 93]];
    const lowBars = [367, 284, 284, 284, 284, 284, 284, 284, 284, 284, 284, 284, 275, 303, 303, 312, 312, 321, 331, 331];

    let out = '<path d="M87 164.500H597" stroke="#5c5050"/>' +
      '<path d="M130 137.500H593" stroke="#0c6c0c" stroke-dasharray="7 3 1 3"/>' +
      '<path d="M88 185L246 268" stroke="#4a78b0" stroke-dasharray="1 3"/>' +
      '<path d="M323 60L597 203" stroke="#4670b0" stroke-width=".9"/>';

    topBars.forEach(([from, to], i) => {
      const x = barX(i + 8);
      out += `<rect x="${x - 1}" y="${from}" width="2" height="${to - from}" fill="#f00"/><rect x="${x - 2}" y="${to - 5}" width="3" height="5" fill="#f00"/>`;
    });
    lowBars.forEach((to, i) => {
      out += `<rect x="${barX(i) - 1}" y="269" width="2" height="${to - 269}" fill="#e80404"/>`;
    });
    candles.forEach(([high, top, bottom, low, filled], i) => {
      const x = barX(i), left = Math.max(x - 7, 87);
      out += `<path d="M${x}.5 ${high}V${top}M${x}.5 ${bottom}V${low}" stroke="#0a7a0a"/>
        <rect x="${left}.5" y="${top}.5" width="${x + 7 - left}" height="${bottom - top}" fill="${filled ? '#fff' : 'none'}" stroke="${filled ? '#16e016' : '#0a7a0a'}"/>`;
    });
    out += '<path d="M87 101L107 68" stroke="#f00" stroke-width="2"/>' +
      '<polyline points="87,94 126,96 145,98 165,104 184,109 204,113 223,116 242,119 262,121 300,122 320,120 340,119 362,119 378,121 400,122 455,123" fill="none" stroke="#777"/>' +
      '<polyline points="87,94 107,99 126,100 145,101 165,107 184,110 204,114 223,118 242,121 264,124 300,125 320,124 340,122 358,123 378,124 397,125 417,125 440,126 456,126" fill="none" stroke="#fff" stroke-width="1.300"/>' +
      '<polyline points="87,150 106,133 126,129 145,146 165,151 184,154 204,159 223,156 242,154 261,148 281,137 300,126 320,116 339,121 358,128 378,129 397,129 417,131 436,132 456,145" fill="none" stroke="#fff200" stroke-width="1.400"/>';
    dots.forEach((y, i) => {
      const magenta = i === 8 || i > 12;
      out += `<circle cx="${barX(i)}" cy="${y}" r="2" fill="${magenta ? '#f0f' : '#3c5cd0'}"/>`;
    });

    // Price scale
    ['1.3155', '1.3145', '1.3135', '1.3125', '1.3115', '1.3105'].forEach((price, i) => {
      const y = 79 + Math.round(i * 34.3);
      out += `<path d="M598 ${y}.5h2" stroke="#a8a8a8"/><text x="601" y="${y + 2}">${price}</text>`;
    });
    out += '<rect x="599" y="161" width="21" height="7" fill="#fff"/><text x="601" y="167" fill="#000">1.3130</text>' +
      '<text x="600" y="276">-0.1433</text><text x="600" y="370">-0.2051</text>';

    // Time scale
    ['2009', '08:30', '09:30', '10:30', '11:30', '12:30', '13:30', '14:30', '15:30', '16:30'].forEach((time, i) => {
      const x = barX(i * 2);
      out += `<path d="M${x}.5 371v2" stroke="#a8a8a8"/><text x="${x - 1}" y="380">10 Apr ${time}</text>`;
    });
    document.getElementById('plot').innerHTML = out;
  </script>
</body>

</html>
